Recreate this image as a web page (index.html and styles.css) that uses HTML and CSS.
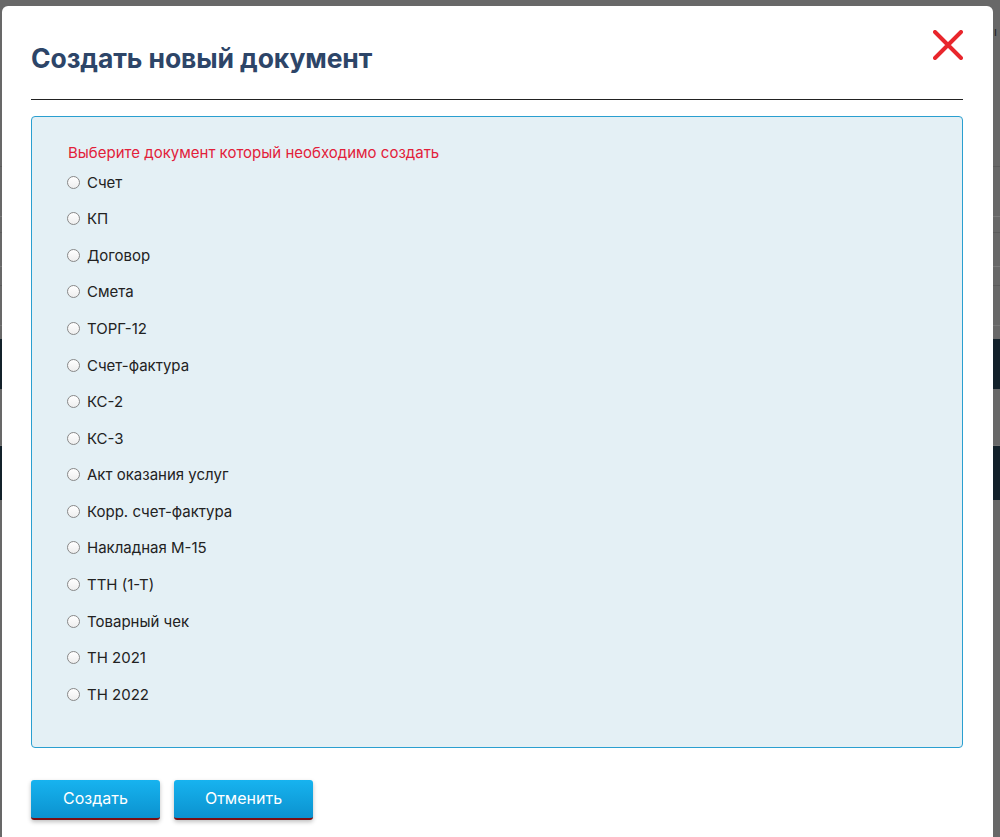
FILE: index.html
```html
<!DOCTYPE html>
<html lang="ru">
<head>
<meta charset="utf-8">
<title>Создать новый документ</title>
<link rel="stylesheet" href="styles.css">
</head>
<body>
<div class="page">
  <div class="page-top"><span class="page-glyph">ı</span></div>
  <div class="page-row r1"></div>
  <div class="page-row r2"></div>
  <div class="page-row r3"></div>
  <div class="page-row r4"></div>
  <div class="page-row r5"></div>
  <div class="page-row r6"></div>
  <div class="page-bar b1"></div>
  <div class="page-row r7"></div>
  <div class="page-bar b2"></div>
</div>

<div class="modal">
  <div class="modal-header">
    <h1 class="modal-title">Создать новый документ</h1>
    <button class="close" aria-label="Закрыть">
      <svg width="30" height="30" viewBox="0 0 30 30"><path d="M2 2 L28 28 M28 2 L2 28" stroke="#e8262c" stroke-width="4" stroke-linecap="round"/></svg>
    </button>
  </div>
  <div class="panel">
    <div class="hint">Выберите документ который необходимо создать</div>
    <label class="opt"><span class="radio"></span>Счет</label>
    <label class="opt"><span class="radio"></span>КП</label>
    <label class="opt"><span class="radio"></span>Договор</label>
    <label class="opt"><span class="radio"></span>Смета</label>
    <label class="opt"><span class="radio"></span>ТОРГ-12</label>
    <label class="opt"><span class="radio"></span>Счет-фактура</label>
    <label class="opt"><span class="radio"></span>КС-2</label>
    <label class="opt"><span class="radio"></span>КС-3</label>
    <label class="opt"><span class="radio"></span>Акт оказания услуг</label>
    <label class="opt"><span class="radio"></span>Корр. счет-фактура</label>
    <label class="opt"><span class="radio"></span>Накладная М-15</label>
    <label class="opt"><span class="radio"></span>ТТН (1-Т)</label>
    <label class="opt"><span class="radio"></span>Товарный чек</label>
    <label class="opt"><span class="radio"></span>ТН 2021</label>
    <label class="opt"><span class="radio"></span>ТН 2022</label>
  </div>
  <div class="actions">
    <button class="btn btn-create">Создать</button>
    <button class="btn btn-cancel">Отменить</button>
  </div>
</div>
</body>
</html>
```

FILE: styles.css
```css
html, body {
  margin: 0;
  padding: 0;
  height: 100%;
  overflow: hidden;
}
body {
  background: #686868;
  font-family: Inter, "Noto Sans", sans-serif;
  position: relative;
}

/* background page (under the modal) */
.page {
  display: flex;
  flex-direction: column;
}
.page-top {
  height: 20px;
  padding-top: 20px;
  padding-left: 994px;
}
.page-glyph {
  color: #222;
  font-size: 12px;
  line-height: 12px;
}
.page-row {
  border-bottom: 1px solid #5c5c5c;
}
.r1 { height: 126px; }
.r2 { height: 49px; border-bottom-color: #7a7a7a; }
.r3 { height: 15px; }
.r4 { height: 33px; border-bottom-color: #7a7a7a; }
.r5 { height: 18px; }
.r6 { height: 39px; border-bottom-color: #777; }
.page-bar {
  background: #13212a;
}
.b1 { margin-top: 13px; height: 50px; }
.r7 { height: 56px; border-bottom-color: #747474; }
.b2 { height: 54px; }

/* modal */
.modal {
  position: absolute;
  top: 6px;
  left: 2px;
  width: 991px;
  height: 860px;
  box-sizing: border-box;
  background: #fff;
  border-radius: 6px 6px 0 0;
  padding: 0 30px 0 29px;
}
.modal-header {
  height: 93px;
  border-bottom: 1px solid #222;
  display: flex;
  justify-content: space-between;
  align-items: flex-start;
}
.modal-title {
  margin: 37px 0 0 0;
  font-size: 26.5px;
  line-height: 30px;
  font-weight: 700;
  color: #2d4568;
  letter-spacing: -0.1px;
}
.close {
  margin-top: 24px;
  padding: 0;
  border: 0;
  background: none;
  width: 30px;
  height: 30px;
  cursor: pointer;
}
.close svg { display: block; }

.panel {
  margin-top: 16px;
  height: 632px;
  box-sizing: border-box;
  background: #e4f0f5;
  border: 1px solid #2a9fd0;
  border-radius: 4px;
  padding: 27px 36px 0 35px;
}
.hint {
  color: #e2203a;
  font-size: 15px;
  line-height: 18px;
  margin-bottom: 2px;
  margin-left: 1px;
}
.opt {
  display: flex;
  align-items: center;
  height: 36.57px;
  font-size: 15px;
  color: #222;
  cursor: pointer;
}
.radio {
  width: 13px;
  height: 13px;
  box-sizing: border-box;
  border: 1px solid #888;
  border-radius: 50%;
  background: linear-gradient(#fff, #eee);
  margin-right: 7px;
  flex: none;
}

.actions {
  margin-top: 32px;
  display: flex;
  gap: 14px;
}
.btn {
  height: 40px;
  box-sizing: border-box;
  border: 0;
  border-bottom: 2px solid #7a0f12;
  border-radius: 3px;
  background: linear-gradient(#17b3ef, #0b92cf);
  color: #fff;
  font-family: Inter, "Noto Sans", sans-serif;
  font-size: 16px;
  box-shadow: 0 2px 4px rgba(0,0,0,0.25);
  cursor: pointer;
  padding: 0 0 2px 0;
}
.btn-create { width: 129px; }
.btn-cancel { width: 139px; }
```
